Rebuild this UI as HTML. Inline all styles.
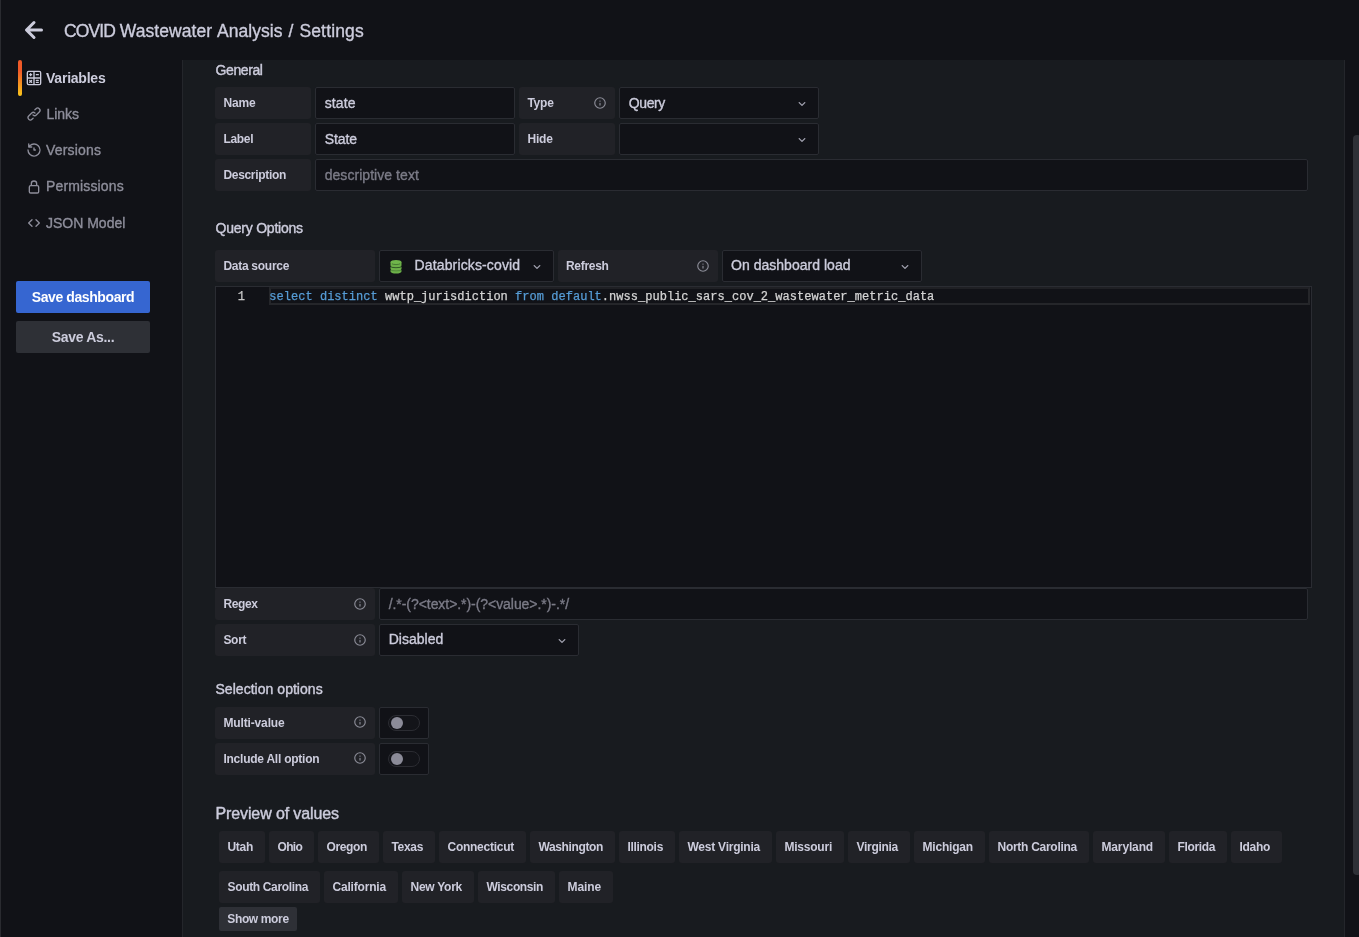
<!DOCTYPE html>
<html>
<head>
<meta charset="utf-8">
<title>COVID Wastewater Analysis / Settings</title>
<style>
*{box-sizing:border-box;margin:0;padding:0}
html,body{width:1359px;height:937px;overflow:hidden;background:#111217}
body{position:relative;font-family:"Liberation Sans",sans-serif;color:#ccccdc;font-size:14px}
#root{position:absolute;left:0;top:0;width:1359px;height:937px;overflow:hidden;will-change:transform}
.abs{position:absolute}
svg{position:absolute;overflow:visible}
#edge{left:0;top:0;width:1px;height:937px;background:#2a2b30}
.title{top:19px;font-size:17.5px;line-height:24px;color:#ccccdc;white-space:nowrap;-webkit-text-stroke:0.35px #ccccdc}
.nav{left:46px;font-size:14px;line-height:20px;color:#8e8e9b;white-space:nowrap;-webkit-text-stroke:0.35px #8e8e9b}
.nav.active{color:#ccccdc;font-weight:bold;-webkit-text-stroke:0}
#bar{left:18px;top:60px;width:4px;height:36px;border-radius:2px;background:linear-gradient(180deg,#f05a28 30%,#fbc51c 99%)}
.btn{left:16px;width:134px;height:32px;border-radius:2px;font-weight:bold;font-size:14px;line-height:32px;text-align:center;white-space:nowrap}
#save{top:281px;background:#3666d1;color:#fff}
#saveas{top:321px;background:#2e3036;color:#ccccdc}
#panel{left:182px;top:60px;width:1163px;height:877px;background:#181b1f;border-left:1px solid #24262b;border-right:1px solid #24262b}
#thumb{left:1353px;top:135px;width:8px;height:740px;border-radius:4px;background:#2e3036}
.h5{left:215.5px;font-size:14px;line-height:20px;color:#ccccdc;white-space:nowrap;-webkit-text-stroke:0.4px #ccccdc}
.lbl{height:32px;background:#212227;border-radius:3px;font-size:12px;font-weight:bold;line-height:32px;padding-left:8.4px;color:#ccccdc;white-space:nowrap}
.inp{height:32px;background:#111217;border:1px solid #2a2c32;border-radius:2px;font-size:14px;line-height:30px;padding-left:8.7px;color:#ccccdc;white-space:nowrap;overflow:hidden;-webkit-text-stroke:0.35px}
.ph{color:#7b7b87}
.tag{height:32px;background:#212227;border-radius:3px;font-size:12px;font-weight:bold;line-height:32px;padding-left:8.5px;color:#ccccdc;white-space:nowrap}
#more{left:219px;top:907px;width:78px;height:24px;line-height:24px;background:#2e3036;padding-left:0;text-align:center;border-radius:2px}
.sw{width:32px;height:16px;border-radius:8px;background:#131419;border:1px solid #2b2c32}
.sw i{position:absolute;left:2px;top:1px;width:12px;height:12px;border-radius:6px;background:#8b8b98}
#editor{left:215px;top:286px;width:1097px;height:302px;background:#111217;border:1px solid #2a2c32}
#curline{left:269px;top:287px;width:1041px;height:18px;border:2px solid #25262a;border-top-color:#1f2024}
.mono{font-family:"Liberation Mono",monospace;font-size:12px;line-height:18px;white-space:pre;color:#d4d4d4;-webkit-text-stroke:0.25px}
.kw{color:#569cd6}
</style>
</head>
<body>
<div id="root">
<div id="edge" class="abs"></div>
<svg style="left:16px;top:12px" width="36" height="36" viewBox="0 0 24 24"><path fill="#ccccdc" d="M17,11H9.41l3.3-3.29a1,1,0,1,0-1.42-1.42l-5,5a1,1,0,0,0-.21.33,1,1,0,0,0,0,.76,1,1,0,0,0,.21.33l5,5a1,1,0,0,0,1.42,0,1,1,0,0,0,0-1.42L9.41,13H17a1,1,0,0,0,0-2Z"/></svg>
<div class="abs title" style="left:64.0px"><span style="letter-spacing:-0.887px">COVID</span></div>
<div class="abs title" style="left:119.8px"><span style="letter-spacing:0.055px">Wastewater</span></div>
<div class="abs title" style="left:217.0px"><span style="letter-spacing:0.041px">Analysis</span></div>
<div class="abs title" style="left:288.6px"><span style="letter-spacing:2.125px">/</span></div>
<div class="abs title" style="left:299.4px"><span style="letter-spacing:0.158px">Settings</span></div>
<div id="bar" class="abs"></div>
<div class="abs nav active" style="top:68px"><span style="letter-spacing:-0.222px">Variables</span></div>
<div class="abs nav" style="top:104px;left:46.5px"><span style="letter-spacing:-0.058px">Links</span></div>
<div class="abs nav" style="top:140px"><span style="letter-spacing:0.200px">Versions</span></div>
<div class="abs nav" style="top:176px"><span style="letter-spacing:0.150px">Permissions</span></div>
<div class="abs nav" style="top:213px"><span style="letter-spacing:-0.006px">JSON Model</span></div>
<svg style="left:26px;top:70px" width="16" height="16" viewBox="0 0 24 24"><path fill="#ccccdc" d="M5.5,8H6v.5a1,1,0,0,0,2,0V8h.5a1,1,0,0,0,0-2H8V5.5a1,1,0,0,0-2,0V6H5.5a1,1,0,0,0,0,2ZM4.88,19.12a1,1,0,0,0,1.41,0L7,18.41l.71.71a1,1,0,0,0,1.41,0,1,1,0,0,0,0-1.41L8.41,17l.71-.71a1,1,0,0,0-1.41-1.41L7,15.59l-.71-.71a1,1,0,0,0-1.41,1.41l.71.71-.71.71A1,1,0,0,0,4.88,19.12ZM20,1H4A3,3,0,0,0,1,4V20a3,3,0,0,0,3,3H20a3,3,0,0,0,3-3V4A3,3,0,0,0,20,1ZM11,21H4a1,1,0,0,1-1-1V13h8Zm0-10H3V4A1,1,0,0,1,4,3h7Zm10,9a1,1,0,0,1-1,1H13V13h8Zm0-9H13V3h7a1,1,0,0,1,1,1Zm-5.5,5.5h3a1,1,0,0,0,0-2h-3a1,1,0,0,0,0,2ZM18.5,6h-3a1,1,0,0,0,0,2h3a1,1,0,0,0,0-2Zm-3,13.5h3a1,1,0,0,0,0-2h-3a1,1,0,0,0,0,2Z"/></svg>
<svg style="left:26px;top:106px" width="16" height="16" viewBox="0 0 24 24"><path fill="#8e8e9b" d="M10,17.55,8.23,19.27a2.47,2.47,0,0,1-3.5-3.5l4.54-4.55a2.46,2.46,0,0,1,3.39-.09l.12.1a1,1,0,0,0,1.4-1.43A2.75,2.75,0,0,0,14,9.59a4.46,4.46,0,0,0-6.09.22L3.31,14.36a4.48,4.48,0,0,0,6.33,6.33L11.37,19A1,1,0,0,0,10,17.55ZM20.69,3.31a4.49,4.49,0,0,0-6.33,0L12.63,5A1,1,0,0,0,14,6.45l1.73-1.72a2.47,2.47,0,0,1,3.5,3.5l-4.54,4.55a2.46,2.46,0,0,1-3.39.09l-.12-.1a1,1,0,0,0-1.4,1.43,2.75,2.75,0,0,0,.23.21,4.47,4.47,0,0,0,6.09-.22l4.55-4.55A4.49,4.49,0,0,0,20.69,3.31Z"/></svg>
<svg style="left:26px;top:142px" width="16" height="16" viewBox="0 0 24 24"><path fill="#8e8e9b" d="M12,2A10,10,0,0,0,5.12,4.77V3a1,1,0,0,0-2,0V7.5a1,1,0,0,0,1,1H8.62a1,1,0,0,0,0-2H6.22A8,8,0,1,1,4,12a1,1,0,0,0-2,0A10,10,0,1,0,12,2Zm0,6a1,1,0,0,0-1,1v3a1,1,0,0,0,1,1h2a1,1,0,0,0,0-2H13V9A1,1,0,0,0,12,8Z"/></svg>
<svg style="left:26px;top:179px" width="16" height="16" viewBox="0 0 24 24"><path fill="#8e8e9b" d="M17,9V7A5,5,0,0,0,7,7V9a3,3,0,0,0-3,3v7a3,3,0,0,0,3,3H17a3,3,0,0,0,3-3V12A3,3,0,0,0,17,9ZM9,7a3,3,0,0,1,6,0V9H9Zm9,12a1,1,0,0,1-1,1H7a1,1,0,0,1-1-1V12a1,1,0,0,1,1-1H17a1,1,0,0,1,1,1Z"/></svg>
<svg style="left:26px;top:215px" width="16" height="16" viewBox="0 0 24 24"><path fill="#8e8e9b" d="M9.71,6.29a1,1,0,0,0-1.42,0l-5,5a1,1,0,0,0,0,1.42l5,5a1,1,0,0,0,1.42,0,1,1,0,0,0,0-1.42L5.41,12l4.3-4.29A1,1,0,0,0,9.71,6.29Zm11,5-5-5a1,1,0,0,0-1.42,1.42L18.59,12l-4.3,4.29a1,1,0,0,0,0,1.42,1,1,0,0,0,1.42,0l5-5A1,1,0,0,0,20.71,11.29Z"/></svg>
<div id="save" class="abs btn"><span style="letter-spacing:-0.411px">Save dashboard</span></div>
<div id="saveas" class="abs btn"><span style="letter-spacing:-0.304px">Save As...</span></div>
<div id="panel" class="abs"></div><div id="thumb" class="abs"></div>
<div class="abs h5" style="top:60px;"><span style="letter-spacing:-0.387px">General</span></div>
<div class="abs lbl" style="left:215px;top:87px;width:96px"><span style="letter-spacing:-0.147px">Name</span></div>
<div class="abs inp " style="left:315px;top:87px;width:200px;"><span style="letter-spacing:0.128px">state</span></div>
<div class="abs lbl" style="left:519px;top:87px;width:96px"><span style="letter-spacing:-0.231px">Type</span></div>
<div class="abs inp " style="left:619px;top:87px;width:200px;"><span style="letter-spacing:-0.365px">Query</span></div>
<div class="abs lbl" style="left:215px;top:123px;width:96px"><span style="letter-spacing:-0.309px">Label</span></div>
<div class="abs inp " style="left:315px;top:123px;width:200px;"><span style="letter-spacing:-0.101px">State</span></div>
<div class="abs lbl" style="left:519px;top:123px;width:96px"><span style="letter-spacing:-0.179px">Hide</span></div>
<div class="abs inp " style="left:619px;top:123px;width:200px;"></div>
<div class="abs lbl" style="left:215px;top:159px;width:96px"><span style="letter-spacing:-0.301px">Description</span></div>
<div class="abs inp ph" style="left:315px;top:159px;width:993px;"><span style="letter-spacing:0.052px">descriptive text</span></div>
<div class="abs h5" style="top:218px;"><span style="letter-spacing:-0.220px">Query Options</span></div>
<div class="abs lbl" style="left:215px;top:250px;width:160px"><span style="letter-spacing:-0.273px">Data source</span></div>
<div class="abs inp " style="left:379px;top:250px;width:174.6px;padding-left:34.6px;line-height:28px"><span style="letter-spacing:0.132px">Databricks-covid</span></div>
<div class="abs lbl" style="left:557.6px;top:250px;width:160.2px"><span style="letter-spacing:-0.298px">Refresh</span></div>
<div class="abs inp " style="left:722px;top:250px;width:200px;padding-left:8px;line-height:28px"><span style="letter-spacing:0.024px">On dashboard load</span></div>
<div id="editor" class="abs"></div>
<div class="abs" id="curline"></div>
<div class="abs mono" style="left:215px;top:288px;width:30px;text-align:right;color:#c6c6c6">1</div>
<div class="abs mono" id="code" style="left:269.3px;top:288px;letter-spacing:0.027px"><span class="kw">select</span> <span class="kw">distinct</span> wwtp_jurisdiction <span class="kw">from</span> <span class="kw">default</span>.nwss_public_sars_cov_2_wastewater_metric_data</div>
<div class="abs lbl" style="left:215px;top:588px;width:160px"><span style="letter-spacing:-0.386px">Regex</span></div>
<div class="abs inp ph" style="left:379px;top:588px;width:929px;"><span style="letter-spacing:-0.056px">/.*-(?&lt;text&gt;.*)-(?&lt;value&gt;.*)-.*/</span></div>
<div class="abs lbl" style="left:215px;top:624px;width:160px"><span style="letter-spacing:-0.275px">Sort</span></div>
<div class="abs inp " style="left:379px;top:624px;width:200px;line-height:28px"><span style="letter-spacing:0.014px">Disabled</span></div>
<div class="abs h5" style="top:679px;"><span style="letter-spacing:0.033px">Selection options</span></div>
<div class="abs lbl" style="left:215px;top:707px;width:160px"><span style="letter-spacing:-0.134px">Multi-value</span></div>
<div class="abs inp " style="left:379px;top:707px;width:50px;"></div>
<div class="abs lbl" style="left:215px;top:743px;width:160px"><span style="letter-spacing:-0.234px">Include All option</span></div>
<div class="abs inp " style="left:379px;top:743px;width:50px;"></div>
<div class="abs sw" style="left:388px;top:715px"><i></i></div><div class="abs sw" style="left:388px;top:751px"><i></i></div>
<div class="abs h5" style="top:802.6px;font-size:16px;line-height:22px"><span style="letter-spacing:-0.117px">Preview of values</span></div>
<svg style="left:593px;top:96px" width="14" height="14" viewBox="0 0 24 24"><path fill="#8b8c97" d="M12,2A10,10,0,1,0,22,12,10.01114,10.01114,0,0,0,12,2Zm0,18a8,8,0,1,1,8-8A8.00917,8.00917,0,0,1,12,20Zm0-8.5a1,1,0,0,0-1,1v3a1,1,0,0,0,2,0v-3A1,1,0,0,0,12,11.5Zm0-4a1.25,1.25,0,1,0,1.25,1.25A1.25,1.25,0,0,0,12,7.5Z"/></svg>
<svg style="left:696px;top:259px" width="14" height="14" viewBox="0 0 24 24"><path fill="#8b8c97" d="M12,2A10,10,0,1,0,22,12,10.01114,10.01114,0,0,0,12,2Zm0,18a8,8,0,1,1,8-8A8.00917,8.00917,0,0,1,12,20Zm0-8.5a1,1,0,0,0-1,1v3a1,1,0,0,0,2,0v-3A1,1,0,0,0,12,11.5Zm0-4a1.25,1.25,0,1,0,1.25,1.25A1.25,1.25,0,0,0,12,7.5Z"/></svg>
<svg style="left:353px;top:597px" width="14" height="14" viewBox="0 0 24 24"><path fill="#8b8c97" d="M12,2A10,10,0,1,0,22,12,10.01114,10.01114,0,0,0,12,2Zm0,18a8,8,0,1,1,8-8A8.00917,8.00917,0,0,1,12,20Zm0-8.5a1,1,0,0,0-1,1v3a1,1,0,0,0,2,0v-3A1,1,0,0,0,12,11.5Zm0-4a1.25,1.25,0,1,0,1.25,1.25A1.25,1.25,0,0,0,12,7.5Z"/></svg>
<svg style="left:353px;top:633px" width="14" height="14" viewBox="0 0 24 24"><path fill="#8b8c97" d="M12,2A10,10,0,1,0,22,12,10.01114,10.01114,0,0,0,12,2Zm0,18a8,8,0,1,1,8-8A8.00917,8.00917,0,0,1,12,20Zm0-8.5a1,1,0,0,0-1,1v3a1,1,0,0,0,2,0v-3A1,1,0,0,0,12,11.5Zm0-4a1.25,1.25,0,1,0,1.25,1.25A1.25,1.25,0,0,0,12,7.5Z"/></svg>
<svg style="left:353px;top:715px" width="14" height="14" viewBox="0 0 24 24"><path fill="#8b8c97" d="M12,2A10,10,0,1,0,22,12,10.01114,10.01114,0,0,0,12,2Zm0,18a8,8,0,1,1,8-8A8.00917,8.00917,0,0,1,12,20Zm0-8.5a1,1,0,0,0-1,1v3a1,1,0,0,0,2,0v-3A1,1,0,0,0,12,11.5Zm0-4a1.25,1.25,0,1,0,1.25,1.25A1.25,1.25,0,0,0,12,7.5Z"/></svg>
<svg style="left:353px;top:751px" width="14" height="14" viewBox="0 0 24 24"><path fill="#8b8c97" d="M12,2A10,10,0,1,0,22,12,10.01114,10.01114,0,0,0,12,2Zm0,18a8,8,0,1,1,8-8A8.00917,8.00917,0,0,1,12,20Zm0-8.5a1,1,0,0,0-1,1v3a1,1,0,0,0,2,0v-3A1,1,0,0,0,12,11.5Zm0-4a1.25,1.25,0,1,0,1.25,1.25A1.25,1.25,0,0,0,12,7.5Z"/></svg>
<svg style="left:794px;top:96px" width="16" height="16" viewBox="0 0 24 24"><path fill="#a2a2b0" d="M16.9,9.2c-0.4-0.4-1-0.4-1.4,0L12,12.7L8.5,9.2c-0.4-0.4-1-0.4-1.4,0s-0.4,1,0,1.4l4.2,4.2c0.2,0.2,0.4,0.3,0.7,0.3c0.3,0,0.5-0.1,0.7-0.3l4.2-4.2C17.3,10.2,17.3,9.6,16.9,9.2z"/></svg>
<svg style="left:794px;top:132px" width="16" height="16" viewBox="0 0 24 24"><path fill="#a2a2b0" d="M16.9,9.2c-0.4-0.4-1-0.4-1.4,0L12,12.7L8.5,9.2c-0.4-0.4-1-0.4-1.4,0s-0.4,1,0,1.4l4.2,4.2c0.2,0.2,0.4,0.3,0.7,0.3c0.3,0,0.5-0.1,0.7-0.3l4.2-4.2C17.3,10.2,17.3,9.6,16.9,9.2z"/></svg>
<svg style="left:529px;top:259px" width="16" height="16" viewBox="0 0 24 24"><path fill="#a2a2b0" d="M16.9,9.2c-0.4-0.4-1-0.4-1.4,0L12,12.7L8.5,9.2c-0.4-0.4-1-0.4-1.4,0s-0.4,1,0,1.4l4.2,4.2c0.2,0.2,0.4,0.3,0.7,0.3c0.3,0,0.5-0.1,0.7-0.3l4.2-4.2C17.3,10.2,17.3,9.6,16.9,9.2z"/></svg>
<svg style="left:897px;top:259px" width="16" height="16" viewBox="0 0 24 24"><path fill="#a2a2b0" d="M16.9,9.2c-0.4-0.4-1-0.4-1.4,0L12,12.7L8.5,9.2c-0.4-0.4-1-0.4-1.4,0s-0.4,1,0,1.4l4.2,4.2c0.2,0.2,0.4,0.3,0.7,0.3c0.3,0,0.5-0.1,0.7-0.3l4.2-4.2C17.3,10.2,17.3,9.6,16.9,9.2z"/></svg>
<svg style="left:554px;top:633px" width="16" height="16" viewBox="0 0 24 24"><path fill="#a2a2b0" d="M16.9,9.2c-0.4-0.4-1-0.4-1.4,0L12,12.7L8.5,9.2c-0.4-0.4-1-0.4-1.4,0s-0.4,1,0,1.4l4.2,4.2c0.2,0.2,0.4,0.3,0.7,0.3c0.3,0,0.5-0.1,0.7-0.3l4.2-4.2C17.3,10.2,17.3,9.6,16.9,9.2z"/></svg>
<svg style="left:389px;top:259px" width="14" height="16" viewBox="0 0 14 16">
<path d="M1.5,2.9v9.5a5.5,2.2 0 0 0 11,0v-9.5z" fill="#6cb048"/>
<ellipse cx="7" cy="2.9" rx="5.5" ry="2" fill="#70b64b"/>
<path d="M3,4.8a4.200,1.100 0 0 0 8,0" fill="none" stroke="#35602a" stroke-width="0.8" opacity=".85"/>
<path d="M1.5,7.300a5.5,1.4 0 0 0 11,0" fill="none" stroke="#2a4f22" stroke-width="0.9"/>
<path d="M1.500,10.600a5.500,1.300 0 0 0 11,0" fill="none" stroke="#3a692c" stroke-width="0.8" opacity=".7"/>
<path d="M1,7.300l1.100,0.100M13,7.300l-1.100,0.100M1,10.600l1,0.100M13,10.600l-1,0.100" stroke="#111217" stroke-width="0.7"/>
</svg>
<div class="abs tag" style="left:219px;top:831px;width:46px"><span style="letter-spacing:-0.293px">Utah</span></div>
<div class="abs tag" style="left:269px;top:831px;width:45px"><span style="letter-spacing:-0.707px">Ohio</span></div>
<div class="abs tag" style="left:318px;top:831px;width:61px"><span style="letter-spacing:-0.362px">Oregon</span></div>
<div class="abs tag" style="left:383px;top:831px;width:52px"><span style="letter-spacing:-0.328px">Texas</span></div>
<div class="abs tag" style="left:439px;top:831px;width:87px"><span style="letter-spacing:-0.259px">Connecticut</span></div>
<div class="abs tag" style="left:530px;top:831px;width:85px"><span style="letter-spacing:-0.372px">Washington</span></div>
<div class="abs tag" style="left:619px;top:831px;width:56px"><span style="letter-spacing:-0.314px">Illinois</span></div>
<div class="abs tag" style="left:679px;top:831px;width:93px"><span style="letter-spacing:-0.238px">West Virginia</span></div>
<div class="abs tag" style="left:776px;top:831px;width:68px"><span style="letter-spacing:-0.230px">Missouri</span></div>
<div class="abs tag" style="left:848px;top:831px;width:62px"><span style="letter-spacing:-0.287px">Virginia</span></div>
<div class="abs tag" style="left:914px;top:831px;width:71px"><span style="letter-spacing:-0.189px">Michigan</span></div>
<div class="abs tag" style="left:989px;top:831px;width:100px"><span style="letter-spacing:-0.275px">North Carolina</span></div>
<div class="abs tag" style="left:1093px;top:831px;width:72px"><span style="letter-spacing:-0.148px">Maryland</span></div>
<div class="abs tag" style="left:1169px;top:831px;width:58px"><span style="letter-spacing:-0.359px">Florida</span></div>
<div class="abs tag" style="left:1231px;top:831px;width:51px"><span style="letter-spacing:-0.300px">Idaho</span></div>
<div class="abs tag" style="left:219px;top:871px;width:101px"><span style="letter-spacing:-0.346px">South Carolina</span></div>
<div class="abs tag" style="left:324px;top:871px;width:74px"><span style="letter-spacing:-0.184px">California</span></div>
<div class="abs tag" style="left:402px;top:871px;width:72px"><span style="letter-spacing:-0.260px">New York</span></div>
<div class="abs tag" style="left:478px;top:871px;width:77px"><span style="letter-spacing:-0.378px">Wisconsin</span></div>
<div class="abs tag" style="left:559px;top:871px;width:54px"><span style="letter-spacing:-0.103px">Maine</span></div>
<div class="abs tag" id="more"><span style="letter-spacing:-0.365px">Show more</span></div>
</div>
</body>
</html>
